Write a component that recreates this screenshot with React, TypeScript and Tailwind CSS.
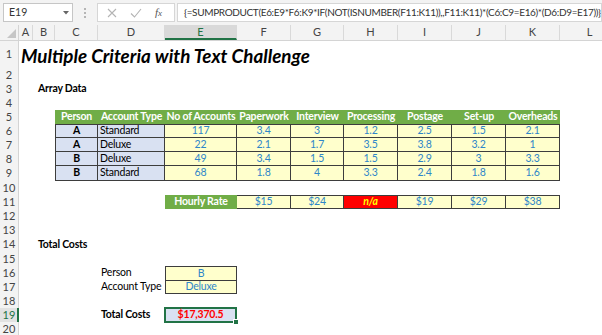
const FONT = { fontFamily: "Lato, 'Open Sans', sans-serif" };

const BLUE = "text-[#2e86c9]";
const CELL_B = "border-[#3d3d3d]";

const data = [
  ["A", "Standard", "117", "3.4", "3", "1.2", "2.5", "1.5", "2.1"],
  ["A", "Deluxe", "22", "2.1", "1.7", "3.5", "3.8", "3.2", "1"],
  ["B", "Deluxe", "49", "3.4", "1.5", "1.5", "2.9", "3", "3.3"],
  ["B", "Standard", "68", "1.8", "4", "3.3", "2.4", "1.8", "1.6"],
];

const heads = ["Person", "Account Type", "No of Accounts", "Paperwork", "Interview", "Processing", "Postage", "Set-up", "Overheads"];

// widths for columns C..K
const tw = ["w-[43px]", "w-[67px]", "w-[72px]", "w-[54px]", "w-[53px]", "w-[54px]", "w-[54px]", "w-[54px]", "w-[54px]"];

const cols = [
  { l: "A", w: "w-[14px]" },
  { l: "B", w: "w-[22px]" },
  { l: "C", w: "w-[43px]" },
  { l: "D", w: "w-[67px]" },
  { l: "E", w: "w-[72px]" },
  { l: "F", w: "w-[54px]" },
  { l: "G", w: "w-[53px]" },
  { l: "H", w: "w-[54px]" },
  { l: "I", w: "w-[54px]" },
  { l: "J", w: "w-[54px]" },
  { l: "K", w: "w-[54px]" },
  { l: "L", w: "w-[60px]" },
];

const Row = ({ n, h = "h-[14px]", sel, children }: { n: number; h?: string; sel?: boolean; children?: React.ReactNode }) => (
  <div className={`flex ${h}`}>
    <div
      className={`w-[19px] shrink-0 flex items-center justify-center text-[11px] tracking-normal border-r ${
        sel ? "text-[#217346] border-r-2 border-r-[#217346] bg-[#e2e2e2] pl-[1px]" : "text-[#444] border-[#d4d4d4] bg-[#f3f3f3]"
      }`}
    >
      {n}
    </div>
    <div className="flex items-stretch">{children}</div>
  </div>
);

const Gap = ({ w }: { w: string }) => <div className={`${w} shrink-0`} />;

const FormulaBar = () => (
  <div className="h-[25px] bg-[#f3f3f3] flex items-start pt-[3px] pl-[3px] text-[#333]">
    <div className="w-[70px] h-[19px] bg-white border border-[#c6c6c6] flex items-center justify-between pl-[5px] pr-[3px] text-[10.5px]">
      <span>E19</span>
      <svg width="6" height="4" viewBox="0 0 6 4">
        <path d="M0 0h6L3 3.5z" fill="#666" />
      </svg>
    </div>
    <div className="w-[24px] h-[19px] flex flex-col items-center justify-center gap-[2px]">
      <div className="w-[2px] h-[2px] bg-[#b5b5b5]" />
      <div className="w-[2px] h-[2px] bg-[#b5b5b5]" />
      <div className="w-[2px] h-[2px] bg-[#b5b5b5]" />
    </div>
    <div className="w-[78px] h-[19px] bg-white border border-[#d6d6d6] flex items-center pl-[9px] gap-[13px]">
      <svg width="10" height="10" viewBox="0 0 10 10">
        <path d="M1 1l8 8M9 1l-8 8" stroke="#b4b4b4" strokeWidth="1.1" />
      </svg>
      <svg width="12" height="10" viewBox="0 0 12 10">
        <path d="M1 5.5l3.5 3.5L11 1" stroke="#b4b4b4" strokeWidth="1.1" fill="none" />
      </svg>
      <span className="text-[11px] italic text-[#555]" style={{ fontFamily: "'Liberation Serif', serif" }}>
        f<span className="text-[9px]">x</span>
      </span>
    </div>
    <div className="ml-[2px] w-[425px] h-[19px] bg-white border border-[#d6d6d6] flex items-center pl-[6px] text-[10px] whitespace-nowrap overflow-hidden tracking-[-0.35px]">
      {"{=SUMPRODUCT(E6:E9*F6:K9*IF(NOT(ISNUMBER(F11:K11)),,F11:K11)*(C6:C9=E16)*(D6:D9=E17))}"}
    </div>
  </div>
);

const ColHeader = () => (
  <div className="flex h-[16px] bg-[#f3f3f3] border-b border-[#d4d4d4]">
    <div className="w-[19px] shrink-0 border-r border-[#d4d4d4] flex items-end justify-end p-[2px]">
      <svg width="9" height="9" viewBox="0 0 9 9">
        <path d="M9 0v9H0z" fill="#c6c6c6" />
      </svg>
    </div>
    {cols.map((c) => (
      <div
        key={c.l}
        className={`${c.w} shrink-0 flex items-center justify-center text-[11px] border-r border-[#d9d9d9] ${
          c.l === "E" ? "bg-[#d9d9d9] text-[#217346] border-b-2 border-b-[#217346] pt-[1px]" : "text-[#444]"
        }`}
      >
        {c.l}
      </div>
    ))}
  </div>
);

const App = () => {
  return (
    <div className="w-[602px] h-[335px] overflow-hidden bg-white text-black" style={FONT}>
      <FormulaBar />
      <ColHeader />
      <div className="text-[10.5px] tracking-[-0.2px]">
        <Row n={1} h="h-[27px]">
          <div className="pl-[2px] pt-[3px] whitespace-nowrap text-[18.8px] tracking-normal font-bold italic leading-none flex items-center">
            Multiple Criteria with Text Challenge
          </div>
        </Row>
        <Row n={2} />
        <Row n={3}>
          <Gap w="w-[14px]" />
          <div className="pl-[5px] font-bold whitespace-nowrap flex items-center">Array Data</div>
        </Row>
        <Row n={4} />
        <Row n={5}>
          <Gap w="w-[36px]" />
          {heads.map((h, i) => (
            <div key={h} className={`${tw[i]} shrink-0 bg-[#70ad47] text-white font-bold flex items-center justify-center whitespace-nowrap`}>
              {h}
            </div>
          ))}
        </Row>
        {data.map((r, ri) => (
          <Row key={ri} n={6 + ri} h={ri === 3 ? "h-[15px]" : "h-[14px]"}>
            <Gap w="w-[36px]" />
            {r.map((v, i) => (
              <div
                key={i}
                className={`${tw[i]} shrink-0 border-r border-b ${CELL_B} ${i === 0 ? "border-l" : ""} ${ri === 0 ? "border-t" : ""} flex items-center ${
                  i === 0
                    ? "bg-[#d9e1f2] justify-center font-bold"
                    : i === 1
                    ? "bg-[#d9e1f2] pl-[2px]"
                    : `bg-[#ffffcc] justify-center ${BLUE}`
                }`}
              >
                {v}
              </div>
            ))}
          </Row>
        ))}
        <Row n={10} />
        <Row n={11}>
          <Gap w="w-[146px]" />
          <div className="w-[72px] shrink-0 bg-[#70ad47] text-white font-bold flex items-center justify-center">Hourly Rate</div>
          {["$15", "$24", "n/a", "$19", "$29", "$38"].map((v, i) => (
            <div
              key={i}
              className={`${tw[i + 3]} shrink-0 border-t border-b border-r ${CELL_B} flex items-center justify-center ${
                v === "n/a" ? "bg-[#ff0000] text-[#ffff00] font-bold italic" : `bg-[#ffffcc] ${BLUE}`
              }`}
            >
              {v}
            </div>
          ))}
        </Row>
        <Row n={12} />
        <Row n={13} />
        <Row n={14} h="h-[15px]">
          <Gap w="w-[14px]" />
          <div className="pl-[5px] font-bold whitespace-nowrap flex items-center">Total Costs</div>
        </Row>
        <Row n={15} />
        <Row n={16}>
          <Gap w="w-[79px]" />
          <div className="w-[67px] shrink-0 pl-[3px] flex items-center">Person</div>
          <div className={`w-[72px] shrink-0 border border-b-0 ${CELL_B} bg-[#ffffcc] ${BLUE} flex items-center justify-center`}>B</div>
        </Row>
        <Row n={17}>
          <Gap w="w-[79px]" />
          <div className="w-[67px] shrink-0 pl-[3px] flex items-center whitespace-nowrap">Account Type</div>
          <div className={`w-[72px] shrink-0 border ${CELL_B} bg-[#ffffcc] ${BLUE} flex items-center justify-center`}>Deluxe</div>
        </Row>
        <Row n={18} />
        <Row n={19} sel>
          <Gap w="w-[79px]" />
          <div className="w-[67px] shrink-0 pl-[3px] flex items-center font-bold whitespace-nowrap">Total Costs</div>
          <div className="relative w-[73px] h-[16px] -mt-[1px] -ml-[1px] shrink-0 border-2 border-[#217346] bg-[#d9e1f2] text-[#ff0000] font-bold flex items-center justify-center">
            $17,370.5
            <div className="absolute -right-[4px] -bottom-[4px] w-[6px] h-[6px] bg-[#217346] border border-white" />
          </div>
        </Row>
        <Row n={20} />
      </div>
    </div>
  );
};

export default App;
